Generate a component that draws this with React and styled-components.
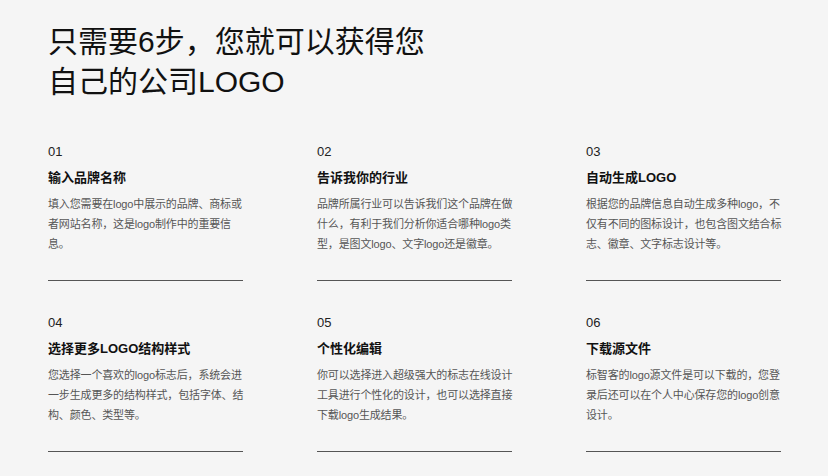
import React from "react";
import styled, { createGlobalStyle } from "styled-components";

const Global = createGlobalStyle`
  body { margin: 0; background: #f5f5f5; font-family: "Liberation Sans", Arial, "Noto Sans CJK SC", sans-serif; color: #111; }
`;
const Page = styled.div`padding: 22px 48px 0;`;
const Title = styled.h1`
  margin: 0; font-size: 30px; line-height: 40px; font-weight: 400; width: 400px; color: #111;
`;
const Grid = styled.div`
  display: grid; grid-template-columns: repeat(3, 195px); column-gap: 74px; row-gap: 32px; margin-top: 40px;
`;
const Item = styled.div`border-bottom: 1px solid #555; padding-bottom: 26px;`;
const Num = styled.div`font-size: 13px; line-height: 20px; color: #222;`;
const Name = styled.div`font-size: 13px; font-weight: 700; line-height: 20px; margin-top: 6px; color: #111;`;
const Desc = styled.div`
  font-size: 11px; line-height: 20px; color: #555; margin-top: 6px; min-height: 60px;
  margin-right: -6px; letter-spacing: -0.15px;
`;

const items = [
  ["01","输入品牌名称","填入您需要在logo中展示的品牌、商标或者网站名称，这是logo制作中的重要信息。"],
  ["02","告诉我你的行业","品牌所属行业可以告诉我们这个品牌在做什么，有利于我们分析你适合哪种logo类型，是图文logo、文字logo还是徽章。"],
  ["03","自动生成LOGO","根据您的品牌信息自动生成多种logo，不仅有不同的图标设计，也包含图文结合标志、徽章、文字标志设计等。"],
  ["04","选择更多LOGO结构样式","您选择一个喜欢的logo标志后，系统会进一步生成更多的结构样式，包括字体、结构、颜色、类型等。"],
  ["05","个性化编辑","你可以选择进入超级强大的标志在线设计工具进行个性化的设计，也可以选择直接下载logo生成结果。"],
  ["06","下载源文件","标智客的logo源文件是可以下载的，您登录后还可以在个人中心保存您的logo创意设计。"],
];

export default function App() {
  return (
    <Page>
      <Global />
      <Title>只需要6步，您就可以获得您自己的公司LOGO</Title>
      <Grid>
        {items.map(([n, t, d]) => (
          <Item key={n}><Num>{n}</Num><Name>{t}</Name><Desc>{d}</Desc></Item>
        ))}
      </Grid>
    </Page>
  );
}
